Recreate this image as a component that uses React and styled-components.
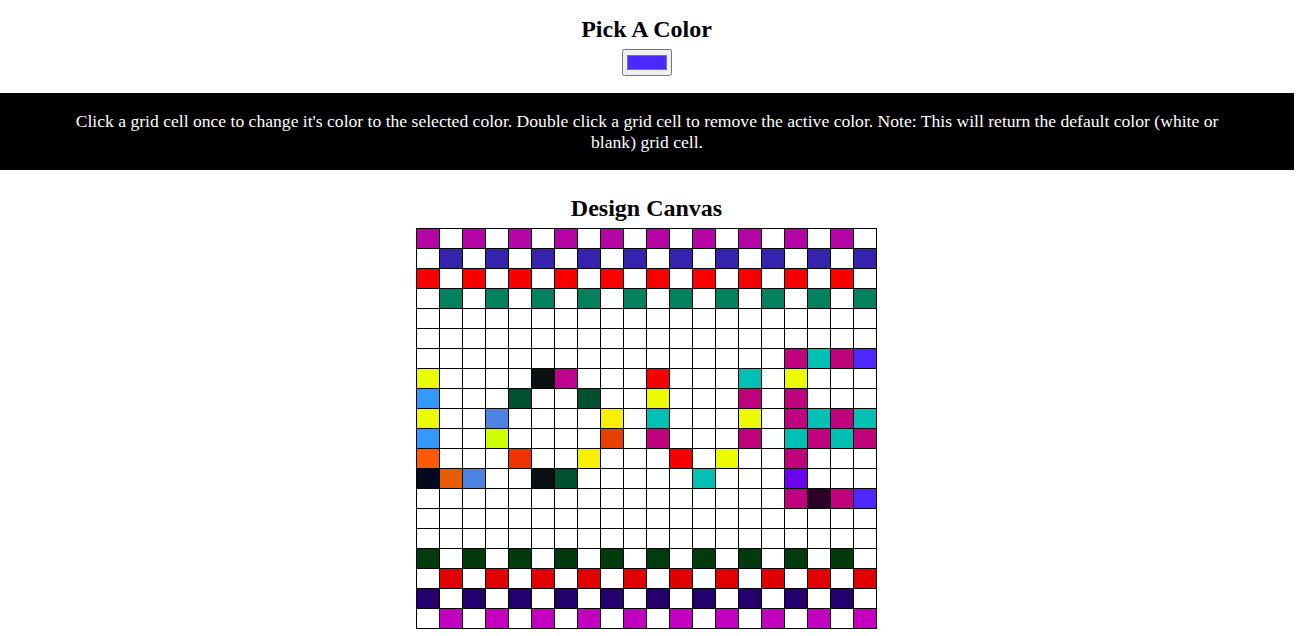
import React from "react";
import styled, { createGlobalStyle } from "styled-components";

const GlobalStyle = createGlobalStyle`
  html, body {
    margin: 0;
    padding: 0;
    background: #ffffff;
    overflow: hidden;
  }
  body {
    font-family: "Liberation Serif", "Times New Roman", serif;
    color: #000;
  }
`;

const Page = styled.div`
  width: 1293px;
  display: flex;
  flex-direction: column;
  align-items: center;
  padding-top: 15px;
`;

const Heading = styled.h2`
  margin: ${(p) => p.$mt || 0}px 0 0;
  font-size: 24px;
  line-height: 28px;
  font-weight: bold;
  text-align: center;
`;

const ColorPicker = styled.input`
  margin: 6px 0 0;
  width: 50px;
  height: 27px;
  box-sizing: border-box;
`;

const Banner = styled.div`
  align-self: stretch;
  margin: 17px -1px 0 0;
  padding: 18px 60px 17px;
  background: #000;
  color: #fff;
  text-align: center;
  font-size: 17.6px;
  line-height: 21px;
`;

const Canvas = styled.div`
  margin-top: 6px;
  display: grid;
  grid-template-columns: repeat(20, 22px);
  grid-auto-rows: 19px;
  gap: 1px;
  padding: 1px;
  background: #000;
`;

const Cell = styled.div`
  background: ${(p) => p.$color || "#ffffff"};
`;

const C = {
  mag: "#b505a5",
  blu: "#3522ad",
  red: "#f80000",
  grn: "#00825e",
  pnk: "#c0037d",
  tea: "#00bfb3",
  vio: "#4f27ff",
  ylw: "#ecfc00",
  blk: "#0b1112",
  mg2: "#bf0390",
  sky: "#3399ff",
  dgr: "#00512f",
  cfl: "#4e82e3",
  yl2: "#f8f000",
  lim: "#ccff00",
  ore: "#e84000",
  org: "#ff5a00",
  ror: "#f03400",
  nav: "#040a1e",
  or2: "#e85c00",
  vi2: "#6a02ee",
  dpu: "#2b0027",
  dg2: "#003b0e",
  rd2: "#e10000",
  ind: "#24006f",
  pur: "#c400c0",
};

const alt = (color, parity) =>
  Array.from({ length: 20 }, (_, i) => (i % 2 === parity ? color : null));

const sparse = (map) =>
  Array.from({ length: 20 }, (_, i) => (map[i] ? map[i] : null));

const rows = [
  alt(C.mag, 0),
  alt(C.blu, 1),
  alt(C.red, 0),
  alt(C.grn, 1),
  sparse({}),
  sparse({}),
  sparse({ 16: C.pnk, 17: C.tea, 18: C.pnk, 19: C.vio }),
  sparse({ 0: C.ylw, 5: C.blk, 6: C.mg2, 10: C.red, 14: C.tea, 16: C.ylw }),
  sparse({ 0: C.sky, 4: C.dgr, 7: C.dgr, 10: C.ylw, 14: C.pnk, 16: C.pnk }),
  sparse({ 0: C.ylw, 3: C.cfl, 8: C.yl2, 10: C.tea, 14: C.ylw, 16: C.pnk, 17: C.tea, 18: C.pnk, 19: C.tea }),
  sparse({ 0: C.sky, 3: C.lim, 8: C.ore, 10: C.pnk, 14: C.pnk, 16: C.tea, 17: C.pnk, 18: C.tea, 19: C.pnk }),
  sparse({ 0: C.org, 4: C.ror, 7: C.yl2, 11: C.red, 13: C.ylw, 16: C.pnk }),
  sparse({ 0: C.nav, 1: C.or2, 2: C.cfl, 5: C.blk, 6: C.dgr, 12: C.tea, 16: C.vi2 }),
  sparse({ 16: C.pnk, 17: C.dpu, 18: C.pnk, 19: C.vio }),
  sparse({}),
  sparse({}),
  alt(C.dg2, 0),
  alt(C.rd2, 1),
  alt(C.ind, 0),
  alt(C.pur, 1),
];

export default function App() {
  return (
    <>
      <GlobalStyle />
      <Page>
        <Heading>Pick A Color</Heading>
        <ColorPicker type="color" value="#4b28ff" onChange={() => {}} />
        <Banner>
          Click a grid cell once to change it's color to the selected color. Double click a grid cell to
          remove the active color. Note: This will return the default color (white or blank) grid cell.
        </Banner>
        <Heading $mt={24}>Design Canvas</Heading>
        <Canvas>
          {rows.map((row, r) =>
            row.map((color, c) => <Cell key={`${r}-${c}`} $color={color} />)
          )}
        </Canvas>
      </Page>
    </>
  );
}
